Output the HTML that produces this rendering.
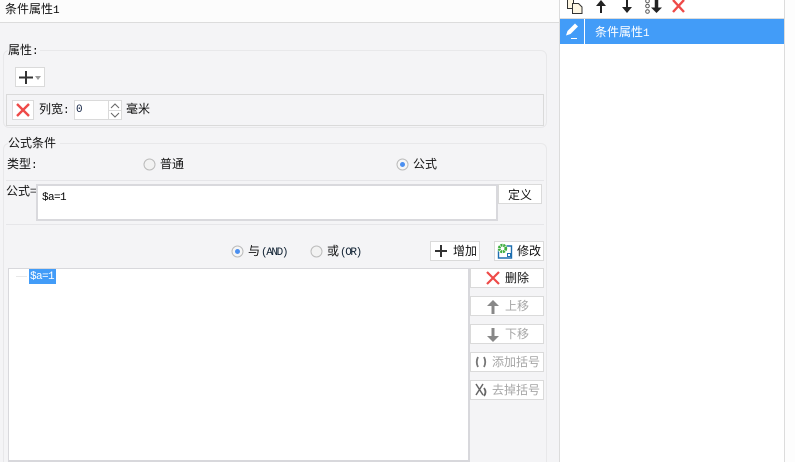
<!DOCTYPE html>
<html><head><meta charset="utf-8"><style>
html,body{margin:0;padding:0;width:795px;height:462px;overflow:hidden}
body{position:relative;background:#f4f4f6;font:12px "WenQuanYi Zen Hei","Noto Sans CJK SC",sans-serif;color:#111}
div,span,svg{position:absolute;box-sizing:border-box}
.t{white-space:nowrap;line-height:14px;height:14px}
.m{font-family:"Liberation Mono",monospace;font-size:11px;letter-spacing:-.6px;color:#000}
.s{position:static;font-family:"Liberation Mono",monospace;font-size:11px;letter-spacing:-1.4px;color:#123;margin-left:1px}
.b{background:#fff;border:1px solid #dadada}
.g{color:#a6a6a6}
.line{background:#e6e6e9}
</style></head><body>
<div style="left:0;top:0;width:559px;height:23px;background:#fcfcfc;border-bottom:1px solid #dcdcdc"></div>
<div class="t" style="left:5px;top:2px">条件属性<span class="m" style="position:static">1</span></div>

<div style="left:559px;top:0;width:226px;height:462px;background:#fff;border-left:1px solid #dcdcdc;border-right:1px solid #dcdcdc"></div>
<div style="left:785px;top:0;width:10px;height:462px;background:#fdfdfd"></div>
<div style="left:560px;top:18px;width:224px;height:1px;background:#dcdcdc"></div>
<div style="left:560px;top:19px;width:224px;height:25px;background:#429cf8"></div>
<div style="left:584px;top:19px;width:1px;height:25px;background:#fff"></div>
<div class="t" style="left:595px;top:25px;color:#fff">条件属性<span class="m" style="position:static;color:#fff">1</span></div>
<svg style="left:560px;top:19px" width="24" height="25" viewBox="0 0 24 25"><path d="M6 16.500l1.500-4.500L15 4.500l3 3-7.500 7.500z" fill="#fff"/><path d="M11 19.500h6" stroke="#fff"/></svg>
<svg style="left:560px;top:0" width="130" height="14" viewBox="0 0 130 14"><path d="M7.500 -1v9.500h6v-9.500z" fill="#fdf6e3" stroke="#333"/><path d="M12.500 3.500h6l3.500 3.500v6.500h-9.500z" fill="#fdf6e3" stroke="#333"/><path d="M41 13V4" stroke="#222" stroke-width="2"/><path d="M36 6l5-6 5 6z" fill="#222"/><path d="M67 0v7" stroke="#222" stroke-width="2"/><path d="M62 7h10l-5 6z" fill="#222"/><circle cx="87.500" cy="1" r="1.800" fill="none" stroke="#555"/><circle cx="87.500" cy="6" r="1.800" fill="none" stroke="#555"/><circle cx="87.500" cy="11.500" r="1.800" fill="none" stroke="#555"/><path d="M96.500 0v8" stroke="#222" stroke-width="3.500"/><path d="M91 7.500h11l-5.500 5.500z" fill="#222"/><path d="M113 0l11 12M124 0l-11 12" stroke="#ee4a48" stroke-width="2.400"/></svg>

<!-- group 1 -->
<div style="left:3px;top:50px;width:544px;height:78px;border:1px solid #e8e8ea;border-radius:6px"></div>
<div class="t" style="left:8px;top:43px;background:#f4f4f6;width:32px;">属性<span class="m" style="position:static">:</span></div>
<div class="b" style="left:15px;top:67px;width:30px;height:20px"></div>
<svg style="left:18px;top:70px" width="26" height="15" viewBox="0 0 26 15"><path d="M1 7.500h14M8 1v13" stroke="#333" stroke-width="2"/><path d="M17 6h6l-3 4z" fill="#999"/></svg>
<div style="left:6px;top:94px;width:538px;height:32px;border:1px solid #dadada"></div>
<div class="b" style="left:12px;top:100px;width:22px;height:20px"></div>
<svg style="left:15px;top:102px" width="16" height="16" viewBox="0 0 16 16"><path d="M2 2l12 12M14 2L2 14" stroke="#ee4a48" stroke-width="2.400"/></svg>
<div class="t" style="left:39px;top:102px">列宽<span class="m" style="position:static">:</span></div>
<div style="left:74px;top:100px;width:48px;height:20px;background:#fff;border:1px solid #dadada"></div>
<div style="left:108px;top:100px;width:1px;height:20px;background:#dadada"></div>
<div style="left:108px;top:110px;width:14px;height:1px;background:#dadada"></div>
<div class="t m" style="left:76px;top:103px;color:#124">0</div>
<svg style="left:109px;top:101px" width="12" height="18" viewBox="0 0 12 18"><path d="M2 7l4-4 4 4M2 12l4 4 4-4" fill="none" stroke="#666"/></svg>
<div class="t" style="left:126px;top:102px">毫米</div>

<!-- group 2 -->
<div style="left:3px;top:143px;width:544px;height:319px;border:1px solid #e8e8ea;border-bottom:0;border-radius:6px 6px 0 0"></div>
<div class="t" style="left:8px;top:136px;background:#f4f4f6;width:52px">公式条件</div>
<div class="t" style="left:7px;top:157px">类型<span class="m" style="position:static">:</span></div>
<svg style="left:143px;top:158px" width="13" height="13"><circle cx="6.500" cy="6.500" r="5.500" fill="#f2f2f2" stroke="#bbb"/></svg>
<div class="t" style="left:160px;top:157px">普通</div>
<svg style="left:396px;top:158px" width="13" height="13"><circle cx="6.500" cy="6.500" r="5.500" fill="#f6f6f6" stroke="#bbb"/><circle cx="6.500" cy="6.500" r="2.500" fill="#4b8ff0"/></svg>
<div class="t" style="left:413px;top:157px">公式</div>
<div class="line" style="left:6px;top:180px;width:538px;height:1px"></div>
<div class="t" style="left:6px;top:184px">公式=</div>
<div style="left:36px;top:184px;width:462px;height:37px;background:#fff;border:2px solid #d9d9dd"></div>
<div class="t m" style="left:42px;top:191px">$a=1</div>
<div class="b" style="left:498px;top:184px;width:44px;height:20px"></div>
<div class="t" style="left:508px;top:188px">定义</div>
<div class="line" style="left:6px;top:224px;width:538px;height:1px"></div>

<svg style="left:231px;top:245px" width="13" height="13"><circle cx="6.500" cy="6.500" r="5.500" fill="#f6f6f6" stroke="#bbb"/><circle cx="6.500" cy="6.500" r="2.500" fill="#4b8ff0"/></svg>
<div class="t" style="left:248px;top:244px">与<span class="s">(AND)</span></div>
<svg style="left:310px;top:245px" width="13" height="13"><circle cx="6.500" cy="6.500" r="5.500" fill="#f2f2f2" stroke="#bbb"/></svg>
<div class="t" style="left:327px;top:244px">或<span class="s">(OR)</span></div>
<div class="b" style="left:430px;top:241px;width:50px;height:20px"></div>
<svg style="left:434px;top:244px" width="14" height="14"><path d="M1 7h12M7 1v12" stroke="#333" stroke-width="2"/></svg>
<div class="t" style="left:453px;top:244px">增加</div>
<div class="b" style="left:494px;top:241px;width:50px;height:20px"></div>
<svg style="left:497px;top:243px" width="16" height="16" viewBox="0 0 16 16"><path d="M1.500 5v10h13V3H6" fill="none" stroke="#1f6fb0" stroke-width="1.400"/><circle cx="5.500" cy="5.500" r="5" fill="#fff"/><circle cx="5.500" cy="5.500" r="3.300" fill="none" stroke="#3fae3f" stroke-width="2.800" stroke-dasharray="2 .7"/><rect x="10.500" y="10.500" width="3" height="3" fill="#fff" stroke="#1f6fb0"/></svg>
<div class="t" style="left:517px;top:244px">修改</div>

<div style="left:8px;top:268px;width:462px;height:194px;background:#fff;border:1px solid #d8d8dc;border-width:1px 2px 2px 1px"></div>
<div style="left:16px;top:276px;width:11px;height:1px;background:#e8e8e8"></div>
<div class="t m" style="left:29px;top:269px;width:27px;height:15px;background:#429cf8;color:#fff;padding-left:1px;line-height:16px">$a=1</div>

<div class="b" style="left:470px;top:268px;width:74px;height:20px"></div>
<svg style="left:486px;top:271px" width="14" height="14"><path d="M1 1l12 12M13 1L1 13" stroke="#ee4a48" stroke-width="2.200"/></svg>
<div class="t" style="left:505px;top:271px">删除</div>
<div class="b" style="left:470px;top:296px;width:74px;height:20px"></div>
<svg style="left:487px;top:300px" width="12" height="14"><path d="M6 14V5" stroke="#888" stroke-width="3"/><path d="M0 6l6-6 6 6z" fill="#888"/></svg>
<div class="t g" style="left:505px;top:299px">上移</div>
<div class="b" style="left:470px;top:324px;width:74px;height:20px"></div>
<svg style="left:487px;top:328px" width="12" height="14"><path d="M6 0v9" stroke="#888" stroke-width="3"/><path d="M0 8h12l-6 6z" fill="#888"/></svg>
<div class="t g" style="left:505px;top:327px">下移</div>
<div class="b" style="left:470px;top:352px;width:74px;height:20px"></div>
<svg style="left:474px;top:356px" width="14" height="12"><path d="M4 1Q1.500 6 4 11M10 1Q12.500 6 10 11" fill="none" stroke="#777" stroke-width="1.800"/></svg>
<div class="t g" style="left:492px;top:355px">添加括号</div>
<div class="b" style="left:470px;top:380px;width:74px;height:20px"></div>
<svg style="left:474px;top:383px" width="15" height="14"><path d="M2 1l7 11M9 1L2 12" stroke="#666" stroke-width="1.500"/><path d="M10 5Q13 9 10 13" fill="none" stroke="#666" stroke-width="1.800"/></svg>
<div class="t g" style="left:492px;top:383px">去掉括号</div>
</body></html>
